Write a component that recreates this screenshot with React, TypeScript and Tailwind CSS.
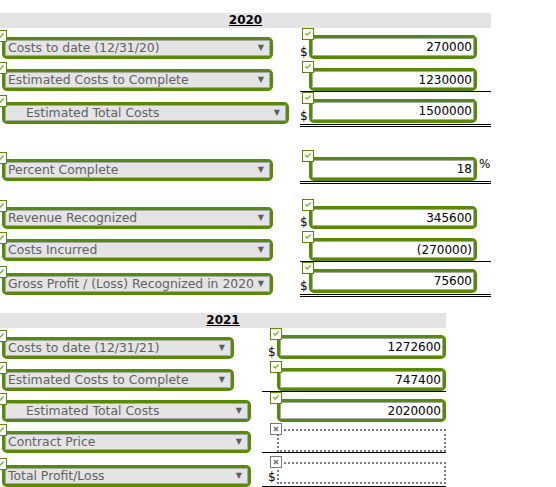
import React from 'react';

type RowDef = {
  kind?: 'row';
  label: string;
  indent?: boolean;
  rowH: string;
  selPt: string;
  selW: string;
  inPt: string;
  inH: string;
  value?: string;
  dollar?: boolean;
  line?: 'single' | 'double';
  pb?: string;
  pct?: boolean;
  wrong?: boolean;
};

type Spacer = { kind: 'spacer'; h: string };

function CheckIcon({ cls }: { cls: string }) {
  return (
    <svg className={`absolute ${cls} w-[12px] h-[12px] z-10`} viewBox="0 0 12 12">
      <rect x="0.5" y="0.5" width="11" height="11" fill="white" stroke="#578a06" strokeWidth="1" />
      <path d="M3.3 5.3 L5.2 7.1 L8.7 3.6" fill="none" stroke="#7cb342" strokeWidth="1.4" />
    </svg>
  );
}

function XIcon({ cls }: { cls: string }) {
  return (
    <svg className={`absolute ${cls} w-[12px] h-[12px] z-10`} viewBox="0 0 12 12">
      <rect x="0.5" y="0.5" width="11" height="11" fill="white" stroke="#7a7a7a" strokeWidth="1" />
      <path d="M4 4 L8 8 M8 4 L4 8" fill="none" stroke="#777777" strokeWidth="1.6" />
    </svg>
  );
}

function Row({ r, leftW, cellPl, inW }: { r: RowDef; leftW: string; cellPl: string; inW: string }) {
  const lineCls =
    r.line === 'single'
      ? 'border-b border-black'
      : r.line === 'double'
      ? 'border-b-[3px] border-double border-black'
      : '';
  return (
    <div className={`flex ${r.rowH}`}>
      <div className={`${leftW} shrink-0 ${r.selPt}`}>
        <div className={`relative ml-[2px] ${r.selW} h-[22px] border-[3px] border-[#578a06] rounded-[5px]`}>
          <CheckIcon cls="-top-[10px] -left-[10px]" />
          <div className={`h-full border border-[#a8a8a8] bg-[#e4e4e4] flex items-center justify-between pr-[5px] text-[#626262] ${r.indent ? 'pl-[20px]' : 'pl-[2px]'}`}>
            <span className="whitespace-nowrap leading-none text-[12.4px]">{r.label}</span>
            <span className="text-[8px] leading-none text-[#5e5e5e]">▼</span>
          </div>
        </div>
      </div>
      <div className={`flex-1 ${r.inPt}`}>
        <div className={`flex ${cellPl} ${lineCls} ${r.pb ?? ''}`}>
          <span className="w-[9px] shrink-0 self-end leading-[13px] text-black">{r.dollar ? '$' : ''}</span>
          <div
            className={`relative ${inW} ${r.inH} ${
              r.wrong ? 'border-2 border-dotted border-[#7e7e7e]' : 'border-[3px] border-[#578a06] rounded-[5px]'
            }`}
          >
            {r.wrong ? <XIcon cls="-top-[8px] -left-[9px]" /> : <CheckIcon cls="-top-[10px] -left-[10px]" />}
            <div
              className={`h-full flex items-center justify-end pr-[1px] bg-white text-black ${
                r.wrong ? '' : 'border border-[#a8a8a8]'
              }`}
            >
              {r.value}
            </div>
          </div>
          {r.pct && <span className="self-start ml-[2px] mt-[1px] leading-none text-black">%</span>}
        </div>
      </div>
    </div>
  );
}

const rows2020: (RowDef | Spacer)[] = [
  { label: 'Costs to date (12/31/20)', rowH: 'h-[33px]', selPt: 'pt-[9px]', selW: 'w-[271px]', inPt: 'pt-[7px]', inH: 'h-[24px]', value: '270000', dollar: true },
  { label: 'Estimated Costs to Complete', rowH: 'h-[32px]', selPt: 'pt-[8px]', selW: 'w-[271px]', inPt: 'pt-[7px]', inH: 'h-[23px]', value: '1230000', line: 'single' },
  { label: 'Estimated Total Costs', indent: true, rowH: 'h-[35px]', selPt: 'pt-[9px]', selW: 'w-[287px]', inPt: 'pt-[6px]', inH: 'h-[24px]', value: '1500000', dollar: true, line: 'double', pb: 'pb-[1px]' },
  { kind: 'spacer', h: 'h-[23px]' },
  { label: 'Percent Complete', rowH: 'h-[33px]', selPt: 'pt-[8px]', selW: 'w-[271px]', inPt: 'pt-[6px]', inH: 'h-[24px]', value: '18', pct: true, line: 'double' },
  { kind: 'spacer', h: 'h-[14px]' },
  { label: 'Revenue Recognized', rowH: 'h-[32px]', selPt: 'pt-[9px]', selW: 'w-[271px]', inPt: 'pt-[8px]', inH: 'h-[23px]', value: '345600', dollar: true },
  { label: 'Costs Incurred', rowH: 'h-[32px]', selPt: 'pt-[9px]', selW: 'w-[271px]', inPt: 'pt-[8px]', inH: 'h-[23px]', value: '(270000)', line: 'single' },
  { label: 'Gross Profit / (Loss) Recognized in 2020', rowH: 'h-[36px]', selPt: 'pt-[11px]', selW: 'w-[271px]', inPt: 'pt-[7px]', inH: 'h-[24px]', value: '75600', dollar: true, line: 'double', pb: 'pb-[1px]' },
];

const rows2021: (RowDef | Spacer)[] = [
  { label: 'Costs to date (12/31/21)', rowH: 'h-[33px]', selPt: 'pt-[9px]', selW: 'w-[232px]', inPt: 'pt-[7px]', inH: 'h-[24px]', value: '1272600', dollar: true },
  { label: 'Estimated Costs to Complete', rowH: 'h-[32px]', selPt: 'pt-[8px]', selW: 'w-[232px]', inPt: 'pt-[7px]', inH: 'h-[23px]', value: '747400', line: 'single' },
  { label: 'Estimated Total Costs', indent: true, rowH: 'h-[30px]', selPt: 'pt-[7px]', selW: 'w-[249px]', inPt: 'pt-[6px]', inH: 'h-[23px]', value: '2020000' },
  { label: 'Contract Price', rowH: 'h-[31px]', selPt: 'pt-[8px]', selW: 'w-[249px]', inPt: 'pt-[6px]', inH: 'h-[23px]', wrong: true, line: 'single' },
  { label: 'Total Profit/Loss', rowH: 'h-[33px]', selPt: 'pt-[11px]', selW: 'w-[249px]', inPt: 'pt-[8px]', inH: 'h-[22px]', wrong: true, dollar: true, line: 'single', pb: 'pb-[2px]' },
];

function Section({
  year,
  rows,
  w,
  leftW,
  cellPl,
  inW,
  mt,
}: {
  year: string;
  rows: (RowDef | Spacer)[];
  w: string;
  leftW: string;
  cellPl: string;
  inW: string;
  mt: string;
}) {
  return (
    <div className={`${w} ${mt}`}>
      <div className="h-[15px] bg-[#e4e4e4] text-center font-bold underline leading-[15px] text-black">{year}</div>
      {rows.map((r, i) =>
        (r as Spacer).kind === 'spacer' ? (
          <div key={i} className={(r as Spacer).h} />
        ) : (
          <Row key={i} r={r as RowDef} leftW={leftW} cellPl={cellPl} inW={inW} />
        )
      )}
    </div>
  );
}

export default function App() {
  return (
    <div className="w-[556px] h-[487px] overflow-hidden bg-white font-['DejaVu_Sans',Verdana,sans-serif] text-[12px]">
      <Section year="2020" rows={rows2020} w="w-[491px]" leftW="w-[300px]" cellPl="pl-0" inW="w-[168px]" mt="mt-[13px]" />
      <Section year="2021" rows={rows2021} w="w-[446px]" leftW="w-[262px]" cellPl="pl-[6px]" inW="w-[169px]" mt="mt-[15px]" />
    </div>
  );
}
